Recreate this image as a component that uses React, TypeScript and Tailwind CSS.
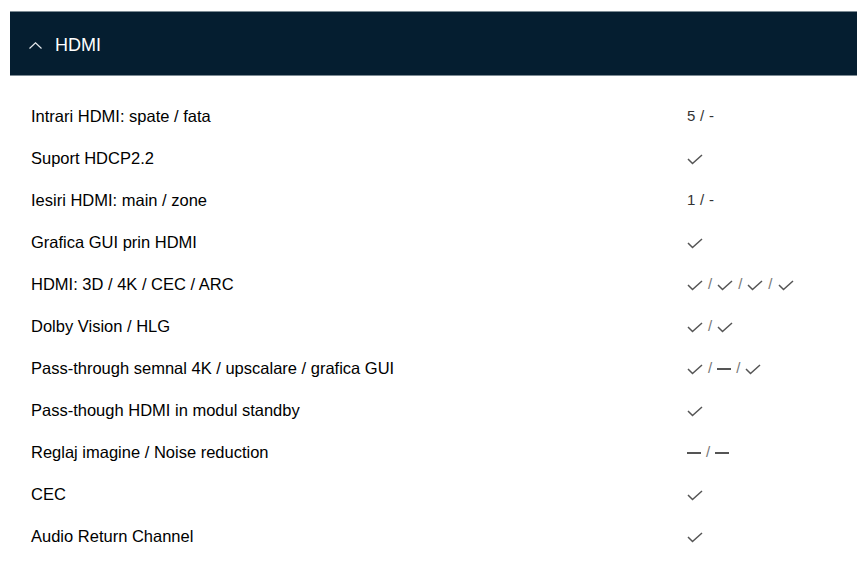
import React from "react"

type Val = string | "check" | "dash"

interface Row {
  label: string
  values: Val[]
}

const rows: Row[] = [
  { label: "Intrari HDMI: spate / fata", values: ["5 / -"] },
  { label: "Suport HDCP2.2", values: ["check"] },
  { label: "Iesiri HDMI: main / zone", values: ["1 / -"] },
  { label: "Grafica GUI prin HDMI", values: ["check"] },
  { label: "HDMI: 3D / 4K / CEC / ARC", values: ["check", "check", "check", "check"] },
  { label: "Dolby Vision / HLG", values: ["check", "check"] },
  { label: "Pass-through semnal 4K / upscalare / grafica GUI", values: ["check", "dash", "check"] },
  { label: "Pass-though HDMI in modul standby", values: ["check"] },
  { label: "Reglaj imagine / Noise reduction", values: ["dash", "dash"] },
  { label: "CEC", values: ["check"] },
  { label: "Audio Return Channel", values: ["check"] },
]

function Check() {
  return (
    <svg width="16" height="11" viewBox="0 0 16 11" fill="none" className="mt-[3px] shrink-0">
      <polyline points="1,5 5.5,9.5 15,1" stroke="#555" strokeWidth="1.5" strokeLinejoin="miter" />
    </svg>
  )
}

function Dash() {
  return <span className="mt-[2px] inline-block h-[2px] w-[14px] bg-[#555]" />
}

function Value({ values }: { values: Val[] }) {
  if (values.length === 1 && values[0] !== "check" && values[0] !== "dash") {
    return <span className="text-[15px] tracking-[0.3px] text-[#333]">{values[0]}</span>
  }
  return (
    <div className="flex items-center gap-[5px]">
      {values.map((v, i) => (
        <React.Fragment key={i}>
          {i > 0 && <span className="text-[15px] text-[#777]">/</span>}
          {v === "check" ? <Check /> : <Dash />}
        </React.Fragment>
      ))}
    </div>
  )
}

export default function App() {
  return (
    <div className="min-h-screen w-full bg-white pt-[11px] pl-[10px]" style={{ fontFamily: '"Liberation Sans", Arial, sans-serif' }}>
      {/* header */}
      <div className="flex h-[65px] items-center gap-[13px] border-y border-[#7d8b94] bg-[#051e30] pt-[3px] pl-[19px]">
        <svg width="13" height="7" viewBox="0 0 13 7" fill="none">
          <polyline points="0.5,6.5 6.5,0.8 12.5,6.5" stroke="#e6e9ec" strokeWidth="1.2" />
        </svg>
        <span className="text-[18px] text-white">HDMI</span>
      </div>

      {/* spec list */}
      <div className="pt-[19px] pl-[21px]">
        {rows.map((r) => (
          <div key={r.label} className="grid h-[42px] grid-cols-[656px_1fr] items-center">
            <span className="text-[16.5px] text-black">{r.label}</span>
            <Value values={r.values} />
          </div>
        ))}
      </div>
    </div>
  )
}
